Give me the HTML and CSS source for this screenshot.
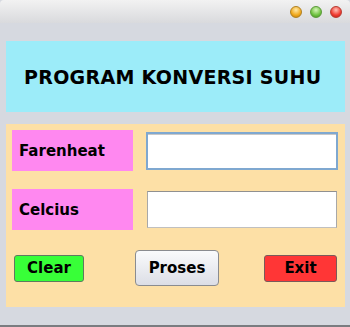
FILE: index.html
```html
<!DOCTYPE html>
<html lang="en">
<head>
  <meta charset="UTF-8">
  <title>Program Konversi Suhu</title>
  <link rel="stylesheet" href="styles.css">
</head>
<body>
  <div class="titlebar">
    <span class="dot dot-min"></span>
    <span class="dot dot-max"></span>
    <span class="dot dot-close"></span>
  </div>

  <div class="window">
    <div class="header">
      <h1>PROGRAM KONVERSI SUHU</h1>
    </div>

    <div class="form">
      <div class="row">
        <label class="label" for="farenheat">Farenheat</label>
        <input id="farenheat" class="field field-focus" type="text">
      </div>
      <div class="row row-second">
        <label class="label" for="celcius">Celcius</label>
        <input id="celcius" class="field" type="text">
      </div>
      <div class="actions">
        <button class="btn btn-clear">Clear</button>
        <button class="btn btn-proses">Proses</button>
        <button class="btn btn-exit">Exit</button>
      </div>
    </div>
  </div>
</body>
</html>
```

FILE: styles.css
```css
* {
  box-sizing: border-box;
}

html, body {
  margin: 0;
  padding: 0;
  width: 350px;
  height: 327px;
  overflow: hidden;
  font-family: "DejaVu Sans", sans-serif;
  background: #d6d9e0;
}

body {
  border-bottom: 2px solid #7a7c80;
}

.titlebar {
  height: 23px;
  display: flex;
  justify-content: flex-end;
  align-items: center;
  gap: 8px;
  padding-right: 8px;
  background: linear-gradient(#f2f2f2, #d9dadd);
  border-radius: 4px 4px 0 0;
}

.dot {
  width: 12px;
  height: 12px;
  border-radius: 50%;
}

.dot-min {
  background: radial-gradient(circle at 50% 30%, #ffe9a8, #f0a81c 60%, #b8780c);
  border: 1px solid #b08020;
}

.dot-max {
  background: radial-gradient(circle at 50% 30%, #d6f5b8, #6fc240 60%, #3f8a20);
  border: 1px solid #5a9a38;
}

.dot-close {
  background: radial-gradient(circle at 50% 30%, #ffc0b8, #f03a30 60%, #b0201a);
  border: 1px solid #b83a30;
}

.window {
  padding: 18px 5px 0 6px;
}

.header {
  height: 71px;
  background: #9cecf9;
  display: flex;
  align-items: center;
  padding-left: 18px;
}

.header h1 {
  margin: 0;
  font-size: 19px;
  font-weight: bold;
  color: #000;
  letter-spacing: 0.3px;
}

.form {
  margin-top: 12px;
  height: 183px;
  background: #fde0a6;
  padding: 6px 0 0 6px;
}

.row {
  display: flex;
  align-items: center;
  height: 41px;
}

.row-second {
  margin-top: 18px;
}

.label {
  width: 121px;
  height: 41px;
  background: #ff88f0;
  display: flex;
  align-items: center;
  padding-left: 7px;
  font-size: 15px;
  font-weight: bold;
  color: #000;
}

.field {
  margin: 0;
  background: #fff;
  outline: none;
  font: 15px "DejaVu Sans", sans-serif;
}

.field-focus {
  margin-left: 13px;
  width: 192px;
  height: 38px;
  border: 2px solid #7fa8d0;
  box-shadow: inset 0 1px 0 #c8c8c8;
}

#celcius {
  margin-left: 14px;
  width: 190px;
  height: 37px;
  border: 1px solid #a8a8a8;
  border-top-color: #909090;
  border-bottom-color: #c0c0c0;
}

.actions {
  display: flex;
  align-items: center;
  height: 36px;
  margin-top: 20px;
  padding-left: 2px;
}

.btn {
  font-family: "DejaVu Sans", sans-serif;
  font-size: 15px;
  font-weight: bold;
  color: #000;
  padding: 0;
  cursor: pointer;
}

.btn-clear {
  width: 70px;
  height: 27px;
  background: #38ff38;
  border: 1px solid #5f7a5f;
  border-radius: 3px;
}

.btn-proses {
  margin-left: 51px;
  width: 84px;
  height: 36px;
  background: linear-gradient(#fafbfc, #dcdee6);
  border: 1px solid #8a8c90;
  border-radius: 4px;
}

.btn-exit {
  margin-left: 45px;
  width: 73px;
  height: 27px;
  background: #ff3636;
  border: 1px solid #7a5a5a;
  border-radius: 3px;
}
```
